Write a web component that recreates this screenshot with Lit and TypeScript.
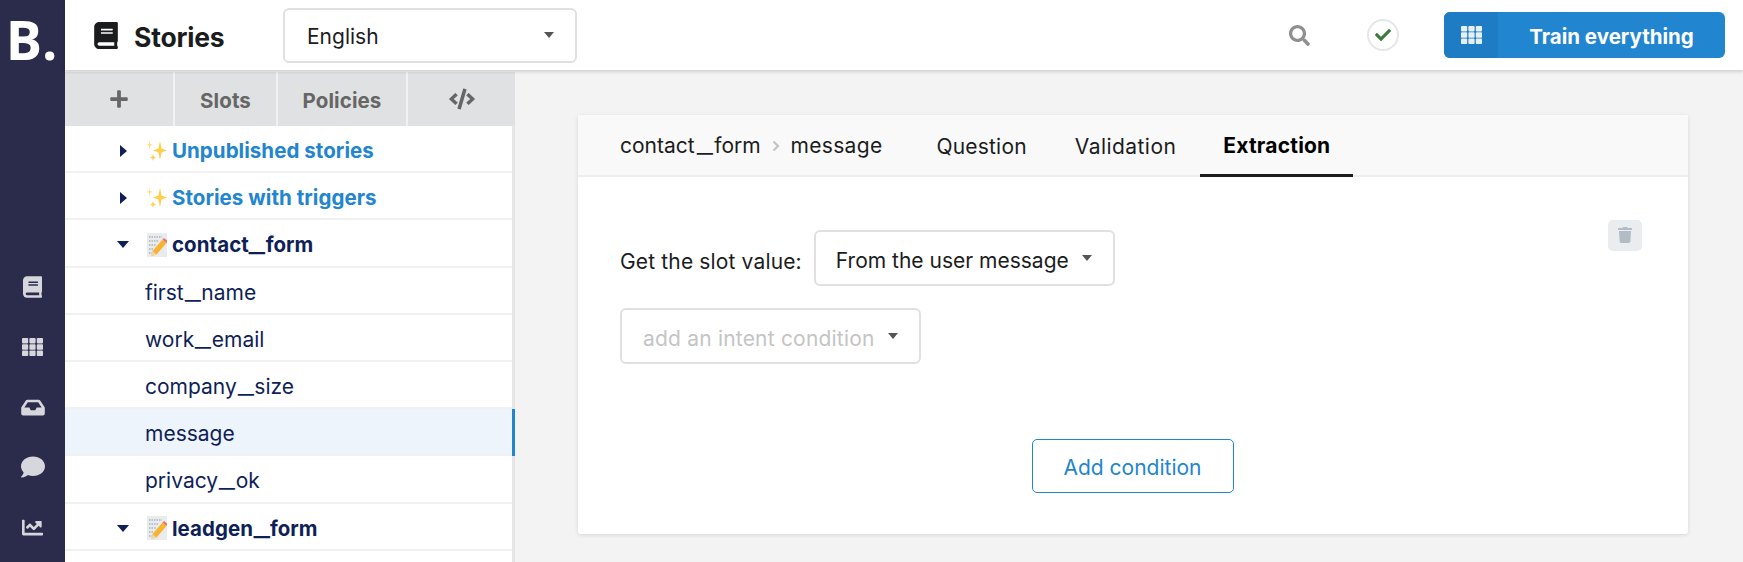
import { LitElement, html, css, svg } from 'lit';
import { customElement } from 'lit/decorators.js';

const fa = (vb: string, d: string, cls = '') =>
    html`<svg class="fa ${cls}" viewBox=${vb} fill="currentColor"><path d=${d}></path></svg>`;

const bookPath = 'M448 360V24c0-13.3-10.7-24-24-24H96C43 0 0 43 0 96v320c0 53 43 96 96 96h328c13.3 0 24-10.7 24-24v-16c0-7.5-3.5-14.3-8.9-18.7-4.2-15.4-4.2-59.3 0-74.7 5.4-4.3 8.9-11.1 8.9-18.6zM128 134c0-3.3 2.7-6 6-6h212c3.3 0 6 2.7 6 6v20c0 3.3-2.7 6-6 6H134c-3.3 0-6-2.7-6-6v-20zm0 64c0-3.3 2.7-6 6-6h212c3.3 0 6 2.7 6 6v20c0 3.3-2.7 6-6 6H134c-3.3 0-6-2.7-6-6v-20zm253.4 250H96c-17.7 0-32-14.3-32-32 0-17.6 14.4-32 32-32h285.4c-1.9 17.1-1.9 46.9 0 64z';
const searchPath = 'M505 442.7L405.3 343c-4.5-4.5-10.6-7-17-7H372c27.6-35.3 44-79.7 44-128C416 93.1 322.9 0 208 0S0 93.1 0 208s93.1 208 208 208c48.3 0 92.7-16.4 128-44v16.3c0 6.4 2.5 12.5 7 17l99.7 99.7c9.4 9.4 24.6 9.4 33.9 0l28.3-28.3c9.4-9.4 9.4-24.6.1-34zM208 336c-70.7 0-128-57.2-128-128 0-70.7 57.2-128 128-128 70.7 0 128 57.2 128 128 0 70.7-57.2 128-128 128z';
const checkPath = 'M173.898 439.404l-166.4-166.4c-9.997-9.997-9.997-26.206 0-36.204l36.203-36.204c9.997-9.998 26.207-9.998 36.204 0L192 312.69 432.095 72.596c9.997-9.997 26.207-9.997 36.204 0l36.203 36.204c9.997 9.997 9.997 26.206 0 36.204l-294.4 294.401c-9.998 9.997-26.207 9.997-36.204-.001z';
const plusPath = 'M416 208H272V64c0-17.67-14.33-32-32-32h-32c-17.67 0-32 14.33-32 32v144H32c-17.67 0-32 14.33-32 32v32c0 17.67 14.33 32 32 32h144v144c0 17.67 14.33 32 32 32h32c17.67 0 32-14.33 32-32V304h144c17.67 0 32-14.33 32-32v-32c0-17.67-14.33-32-32-32z';
const codePath = 'M278.9 511.5l-61-17.7c-6.4-1.8-10-8.5-8.2-14.9L346.2 8.7c1.8-6.4 8.5-10 14.9-8.2l61 17.7c6.4 1.8 10 8.5 8.2 14.9L293.8 503.3c-1.9 6.4-8.5 10.1-14.9 8.2zm-114-112.2l43.5-46.4c4.6-4.9 4.3-12.7-.8-17.2L117 256l90.6-79.7c5.1-4.5 5.5-12.3.8-17.2l-43.5-46.4c-4.5-4.8-12.1-5.1-17-.5L3.8 247.2c-5.1 4.7-5.1 12.8 0 17.5l144.1 135.1c4.9 4.6 12.5 4.4 17-.5zm327.2.6l144.1-135.1c5.1-4.7 5.1-12.8 0-17.5L492.1 112.1c-4.8-4.5-12.4-4.3-17 .5L431.6 159c-4.6 4.9-4.3 12.7.8 17.2L523 256l-90.6 79.7c-5.1 4.5-5.5 12.3-.8 17.2l43.5 46.4c4.5 4.9 12.1 5.1 17 .6z';
const trashPath = 'M432 32H312l-9.4-18.7A24 24 0 0 0 281.1 0H166.8a23.72 23.72 0 0 0-21.4 13.3L136 32H16A16 16 0 0 0 0 48v32a16 16 0 0 0 16 16h416a16 16 0 0 0 16-16V48a16 16 0 0 0-16-16zM53.2 467a48 48 0 0 0 47.9 45h245.8a48 48 0 0 0 47.9-45L416 128H32z';
const inboxPath = 'M567.938 243.908L462.25 85.374A48.003 48.003 0 0 0 422.311 64H153.689a48 48 0 0 0-39.938 21.374L8.062 243.908A47.994 47.994 0 0 0 0 270.533V400c0 26.51 21.49 48 48 48h480c26.51 0 48-21.49 48-48V270.533a47.994 47.994 0 0 0-8.062-26.625zM162.252 128h251.497l85.333 128H376l-32 64H232l-32-64H76.918l85.334-128z';
const commentPath = 'M256 32C114.6 32 0 125.1 0 240c0 49.6 21.4 95 57 130.7C44.5 421.1 2.7 466 2.2 466.5c-2.2 2.3-2.8 5.7-1.5 8.7S4.8 480 8 480c66.3 0 116-31.8 140.6-51.4 32.7 12.3 69 19.4 107.4 19.4 141.4 0 256-93.1 256-208S397.4 32 256 32z';
const chartPath = 'M496 384H64V80c0-8.84-7.16-16-16-16H16C7.16 64 0 71.16 0 80v336c0 17.67 14.33 32 32 32h464c8.84 0 16-7.16 16-16v-32c0-8.84-7.16-16-16-16zM464 96H345.94c-21.38 0-32.09 25.85-16.97 40.97l32.4 32.4L288 242.75l-73.37-73.37c-12.5-12.5-32.76-12.5-45.25 0l-68.69 68.69c-6.25 6.25-6.25 16.38 0 22.63l22.62 22.62c6.25 6.25 16.38 6.25 22.63 0L192 237.25l73.37 73.37c12.5 12.5 32.76 12.5 45.25 0l96-96 32.4 32.4c15.12 15.12 40.97 4.41 40.97-16.97V112c0-8.84-7.16-16-16-16z';

const gridIcon = () => html`<svg class="fa grid" viewBox="0 0 21 18" fill="currentColor">
  ${[0, 7.4, 14.8].map(x => [0, 6.3, 12.6].map(y => svg`<rect x=${x} y=${y} width="6.2" height="5.4" rx="0.8"></rect>`))}
</svg>`;

const sparkles = html`<svg class="emoji" viewBox="0 0 20 20">
  <path d="M13 0 14.6 7.6 20 9.5 14.6 11.4 13 19 11.4 11.4 6 9.5 11.4 7.6z" fill="#fdcf4a"></path>
  <path d="M2.6 0 3.3 2.9 5.2 3.8 3.3 4.7 2.6 8 1.9 4.7 0 3.8 1.9 2.9z" fill="#fedd7a"></path>
  <path d="M6 13 6.8 15.6 9 16.5 6.8 17.4 6 20 5.2 17.4 3 16.5 5.2 15.6z" fill="#fdcf4a"></path>
</svg>`;

const memo = html`<svg class="emoji" viewBox="0 0 20 24">
  <rect width="20" height="24" fill="#e9ecee"></rect>
  <path d="M2 4h13M2 8h10M2 12h7M2 16h5M2 20h4" stroke="#8b979e" stroke-width="1.2" stroke-dasharray="1.5 1"></path>
  <path d="M15.5 6.5 19.5 10 9.5 21.5 4.5 23 5.5 18z" fill="#f9b233"></path>
  <path d="M15.5 6.5 17 5l3.5 3-1 2z" fill="#e8756a"></path>
  <path d="M5.5 18 4.5 23 9.5 21.5z" fill="#f3d6a8"></path>
</svg>`;

// underscores are much wider in the original face, so they get stretched
const snake = (s: string) => {
    const parts = s.split('_');
    return parts.map((p, i) => (i ? html`<span class="us">_</span>${p}` : p));
};

type Row = { label: string; kind: 'magic' | 'folder' | 'child'; open?: boolean; selected?: boolean };

const rows: Row[] = [
    { label: 'Unpublished stories', kind: 'magic' },
    { label: 'Stories with triggers', kind: 'magic' },
    { label: 'contact_form', kind: 'folder', open: true },
    { label: 'first_name', kind: 'child' },
    { label: 'work_email', kind: 'child' },
    { label: 'company_size', kind: 'child' },
    { label: 'message', kind: 'child', selected: true },
    { label: 'privacy_ok', kind: 'child' },
    { label: 'leadgen_form', kind: 'folder', open: true },
];

@customElement('app-root')
export class AppRoot extends LitElement {
    static styles = css`
    :host {
      display: grid;
      grid-template-columns: 65px 1fr;
      height: 562px;
      overflow: hidden;
      background: #f3f3f3;
      font-family: Inter, 'Liberation Sans', sans-serif;
      font-size: 21px;
      color: #1b1c1d;
    }

    .fa {
      display: block;
    }

    .us {
      display: inline-block;
      margin: 0 4px;
      transform: scaleX(1.7);
    }

    .nav {
      background: #2b2c4b;
      color: #d6d6dd;
      display: flex;
      flex-direction: column;
      align-items: center;
    }

    .logo {
      color: #fff;
      font-family: 'Open Sans', sans-serif;
      font-weight: 700;
      font-size: 54px;
      line-height: 78px;
      height: 70px;
      letter-spacing: 0;
      margin-right: 2px;
      margin-bottom: 187px;
    }

    .nav-icons {
      display: grid;
      grid-auto-rows: 60px;
      place-items: center;
    }

    .nav-icons .i-book {
      width: 19px;
      height: 22px;
    }

    .nav-icons .grid {
      width: 21px;
      height: 18px;
    }

    .nav-icons .i-inbox {
      width: 24px;
      height: 21px;
    }

    .nav-icons .i-comment {
      width: 24px;
      height: 24px;
    }

    .nav-icons .i-chart {
      width: 21px;
      height: 17px;
    }

    .main {
      display: flex;
      flex-direction: column;
      min-width: 0;
    }

    .topbar {
      height: 70px;
      flex: none;
      background: #fff;
      box-shadow: 0 2px 3px rgba(0, 0, 0, 0.14);
      display: flex;
      align-items: center;
      padding: 0 18px 0 29px;
      position: relative;
      z-index: 1;
    }

    .title {
      display: flex;
      align-items: center;
      gap: 16px;
      width: 189px;
      font-size: 26.5px;
      font-weight: 700;
      letter-spacing: -0.2px;
    }

    .title span {
      margin-top: 4px;
    }

    .title .fa {
      width: 24px;
      height: 27px;
    }

    .select {
      box-sizing: border-box;
      display: flex;
      align-items: center;
      background: #fff;
      border: 2px solid #e0e0e0;
      border-radius: 6px;
      white-space: nowrap;
    }

    .caret {
      width: 0;
      height: 0;
      border-left: 5.5px solid transparent;
      border-right: 5.5px solid transparent;
      border-top: 6px solid #555;
    }

    .lang {
      width: 294px;
      height: 55px;
      justify-content: space-between;
      padding: 0 21px 0 22px;
    }

    .lang span:first-child {
      margin-top: 2px;
    }

    .spacer {
      flex: 1;
    }

    .search {
      width: 21px;
      height: 21px;
      color: #8f8f8f;
      margin-right: 57px;
    }

    .status {
      box-sizing: border-box;
      width: 32px;
      height: 32px;
      border: 2px solid #e6e6e6;
      border-radius: 50%;
      display: flex;
      align-items: center;
      justify-content: center;
      color: #3d7a3f;
      margin-right: 45px;
    }

    .status .fa {
      width: 16px;
      height: 16px;
    }

    .train {
      width: 281px;
      height: 46px;
      display: flex;
      border-radius: 6px;
      overflow: hidden;
      background: #2185d0;
      color: #fff;
      font-weight: 700;
      font-size: 20.5px;
    }

    .train-icon {
      width: 54px;
      background: #1e7cc4;
      display: flex;
      align-items: center;
      justify-content: center;
    }

    .train-icon .fa {
      width: 21px;
      height: 18px;
      color: #e6f0f8;
    }

    .train-label {
      flex: 1;
      display: flex;
      align-items: center;
      justify-content: center;
      padding-top: 3px;
    }

    .body {
      flex: 1;
      display: flex;
      min-height: 0;
    }

    .sidebar {
      width: 450px;
      flex: none;
      display: flex;
      flex-direction: column;
      padding-top: 2px;
    }

    .tabs {
      display: flex;
      height: 54px;
      flex: none;
      background: #e0e1e2;
      color: #666;
      font-weight: 700;
      font-size: 20.5px;
      letter-spacing: 0.1px;
    }

    .tabs > div {
      box-sizing: border-box;
      display: flex;
      align-items: center;
      justify-content: center;
      border-right: 2.5px solid #f1f1f1;
    }

    .tabs > div:last-child {
      border-right: none;
    }

    .tab-add {
      width: 110px;
    }

    .tab-slots {
      width: 103px;
    }

    .tab-policies {
      width: 130px;
    }

    .tab-code {
      flex: 1;
    }

    .tab-add .fa {
      width: 18px;
      height: 20px;
    }

    .tab-code .fa {
      width: 26px;
      height: 22px;
    }

    .tab-slots span,
    .tab-policies span {
      margin-top: 3px;
    }

    .list {
      flex: 1;
      background: #fff;
      border-right: 3px solid #e6e6e6;
    }

    .row {
      box-sizing: border-box;
      height: 47.2px;
      padding-top: 4px;
      display: flex;
      align-items: center;
      border-bottom: 2px solid #f1f1f1;
      color: #0f1f57;
      white-space: nowrap;
    }

    .row.selected {
      background: #edf4fb;
      box-shadow: 3px 0 0 #2185d0;
    }

    .row.child {
      padding-left: 80px;
    }

    .row.folder,
    .row.magic {
      font-weight: 700;
      font-size: 20.5px;
      letter-spacing: 0.05px;
      padding-left: 52px;
    }

    .row.folder .us {
      margin: 0 3.5px;
    }

    .row.magic {
      color: #2185d0;
    }

    .arrow {
      width: 12px;
      display: flex;
      justify-content: center;
      margin-right: 18px;
    }

    .tri-right {
      width: 0;
      height: 0;
      border-top: 6.5px solid transparent;
      border-bottom: 6.5px solid transparent;
      border-left: 7px solid #0f1f57;
    }

    .tri-down {
      width: 0;
      height: 0;
      border-left: 6.5px solid transparent;
      border-right: 6.5px solid transparent;
      border-top: 7px solid #0f1f57;
    }

    .emoji {
      width: 20px;
      height: 24px;
      margin-right: 5px;
      flex: none;
    }

    .content {
      flex: 1;
      padding: 44.5px 55px 0 63px;
    }

    .card {
      height: 419px;
      background: #fff;
      border-radius: 3px;
      box-shadow: 0 1px 4px rgba(0, 0, 0, 0.12);
      display: flex;
      flex-direction: column;
      position: relative;
    }

    .card-head {
      box-sizing: border-box;
      height: 62px;
      flex: none;
      background: #f9f9f9;
      border-bottom: 2px solid #eeeeee;
      display: flex;
      padding-left: 42px;
      color: #1b1c1d;
    }

    .crumbs {
      display: flex;
      align-items: center;
      gap: 11px;
      margin-right: 30px;
      padding-top: 2px;
    }

    .crumbs .us {
      margin: 0 5px;
    }

    .crumb-leaf {
      letter-spacing: 0.3px;
    }

    .crumbs svg {
      width: 8px;
      height: 12px;
    }

    .card-tab {
      box-sizing: border-box;
      display: flex;
      align-items: center;
      padding: 2px 24px 0;
      height: 62px;
      letter-spacing: 0.2px;
    }

    .card-tab.wide {
      letter-spacing: 0.45px;
    }

    .card-tab.active {
      padding: 2px 23px 0;
      font-weight: 700;
      color: #000;
      border-bottom: 3px solid #1b1c1d;
    }

    .form {
      flex: 1;
      padding: 53px 42px 0;
      display: flex;
      flex-direction: column;
    }

    .line {
      display: flex;
      align-items: center;
      gap: 12px;
    }

    .label {
      margin-top: 7px;
      letter-spacing: 0.15px;
    }

    .form .select {
      height: 56px;
      gap: 13px;
    }

    .form .select span:first-child {
      margin-top: 6px;
    }

    .from {
      width: 301px;
      padding-left: 20px;
    }

    .intent {
      width: 301px;
      padding-left: 21px;
      margin-top: 22px;
      color: #c4c4c4;
      letter-spacing: 0.2px;
    }

    .trash {
      position: absolute;
      right: 46px;
      top: 105px;
      width: 34px;
      height: 31px;
      border-radius: 5px;
      background: #e9edf0;
      color: #b3bcc4;
      display: flex;
      align-items: center;
      justify-content: center;
    }

    .trash .fa {
      width: 14px;
      height: 16px;
    }

    .add {
      box-sizing: border-box;
      align-self: center;
      width: 202px;
      height: 54px;
      margin: 75px 0 0 -1px;
      padding-top: 3px;
      border: 1.5px solid #2185d0;
      border-radius: 5px;
      color: #2185d0;
      display: flex;
      align-items: center;
      justify-content: center;
    }
    `;

    renderRow(r: Row) {
        return html`
      <div class="row ${r.kind} ${r.selected ? 'selected' : ''}">
        ${r.kind !== 'child' ? html`
          <span class="arrow"><span class=${r.open ? 'tri-down' : 'tri-right'}></span></span>
          ${r.kind === 'magic' ? sparkles : memo}
        ` : ''}
        <span>${snake(r.label)}</span>
      </div>
    `;
    }

    render() {
        return html`
      <div class="nav">
        <div class="logo">B.</div>
        <div class="nav-icons">
          ${fa('0 0 448 512', bookPath, 'i-book')}
          ${gridIcon()}
          ${fa('0 0 576 512', inboxPath, 'i-inbox')}
          ${fa('0 0 512 512', commentPath, 'i-comment')}
          ${fa('0 50 512 410', chartPath, 'i-chart')}
        </div>
      </div>
      <div class="main">
        <div class="topbar">
          <div class="title">${fa('0 0 448 512', bookPath)}<span>Stories</span></div>
          <div class="select lang"><span>English</span><span class="caret"></span></div>
          <div class="spacer"></div>
          ${fa('0 0 512 512', searchPath, 'search')}
          <div class="status">${fa('0 0 512 512', checkPath)}</div>
          <div class="train">
            <div class="train-icon">${gridIcon()}</div>
            <div class="train-label">Train everything</div>
          </div>
        </div>
        <div class="body">
          <div class="sidebar">
            <div class="tabs">
              <div class="tab-add">${fa('0 0 448 512', plusPath)}</div>
              <div class="tab-slots"><span>Slots</span></div>
              <div class="tab-policies"><span>Policies</span></div>
              <div class="tab-code">${fa('0 0 640 512', codePath)}</div>
            </div>
            <div class="list">${rows.map(r => this.renderRow(r))}</div>
          </div>
          <div class="content">
            <div class="card">
              <div class="card-head">
                <div class="crumbs">
                  <span>${snake('contact_form')}</span>
                  <svg viewBox="0 0 8 12" fill="none" stroke="#c4c4c4" stroke-width="2.2"><path d="M1.5 1.5 6 6l-4.5 4.5"></path></svg>
                  <span class="crumb-leaf">message</span>
                </div>
                <div class="card-tab">Question</div>
                <div class="card-tab wide">Validation</div>
                <div class="card-tab active">Extraction</div>
              </div>
              <div class="form">
                <div class="line">
                  <span class="label">Get the slot value:</span>
                  <div class="select from"><span>From the user message</span><span class="caret"></span></div>
                </div>
                <div class="select intent"><span>add an intent condition</span><span class="caret"></span></div>
                <div class="add">Add condition</div>
              </div>
              <div class="trash">${fa('0 0 448 512', trashPath)}</div>
            </div>
          </div>
        </div>
      </div>
    `;
    }
}
